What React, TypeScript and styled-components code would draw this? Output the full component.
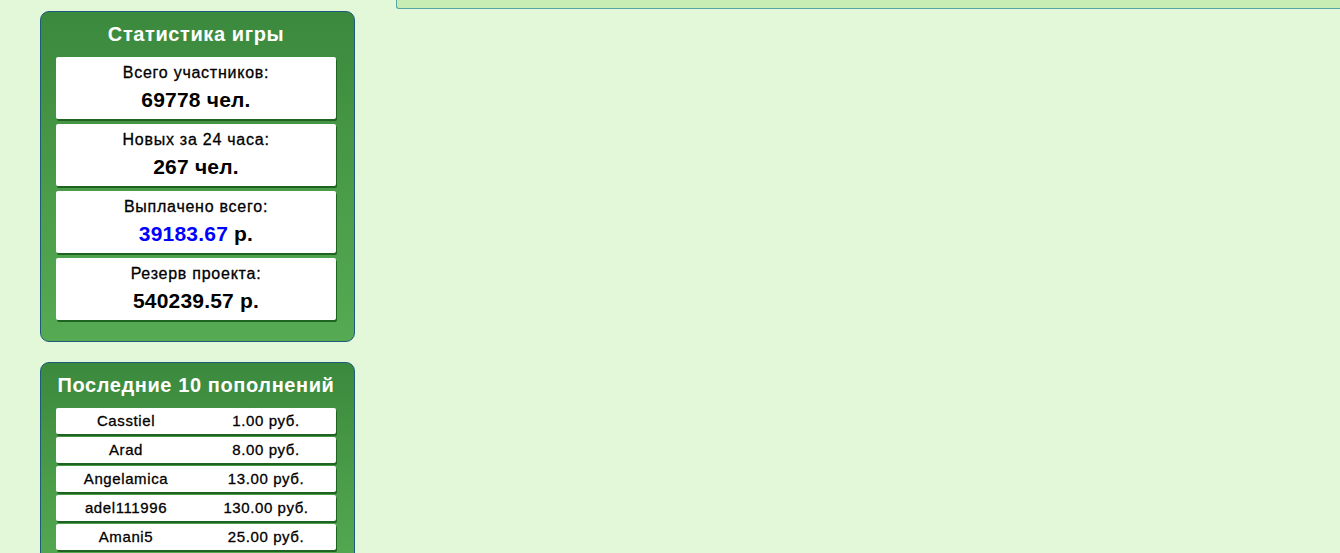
import React from "react";
import styled, { createGlobalStyle } from "styled-components";

const GlobalStyle = createGlobalStyle`
  html, body {
    margin: 0;
    padding: 0;
    background: #e3f8d8;
    font-family: "Liberation Sans", Arial, sans-serif;
    overflow: hidden;
  }
`;

const stats = [
  { label: "Всего участников:", value: "69778", unit: "чел." },
  { label: "Новых за 24 часа:", value: "267", unit: "чел." },
  { label: "Выплачено всего:", value: "39183.67", unit: "р.", blue: true },
  { label: "Резерв проекта:", value: "540239.57", unit: "р." },
];

const deposits = [
  { name: "Casstiel", sum: "1.00 руб." },
  { name: "Arad", sum: "8.00 руб." },
  { name: "Angelamica", sum: "13.00 руб." },
  { name: "adel111996", sum: "130.00 руб." },
  { name: "Amani5", sum: "25.00 руб." },
];

const App = () => {
  return (
    <>
      <GlobalStyle />
      <Page>
        <Sidebar>
          <Panel>
            <PanelTitle>Статистика игры</PanelTitle>
            {stats.map((s) => (
              <StatBox key={s.label}>
                <StatLabel>{s.label}</StatLabel>
                <StatValue>
                  <Num $blue={s.blue}>{s.value}</Num> {s.unit}
                </StatValue>
              </StatBox>
            ))}
          </Panel>
          <Panel>
            <PanelTitle>Последние 10 пополнений</PanelTitle>
            {deposits.map((d) => (
              <Row key={d.name}>
                <Cell>{d.name}</Cell>
                <Cell>{d.sum}</Cell>
              </Row>
            ))}
          </Panel>
        </Sidebar>
        <Content>
          <TopStrip />
        </Content>
      </Page>
    </>
  );
};

export default App;

const Page = styled.div`
  display: flex;
  gap: 41px;
  padding-left: 40px;
  height: 553px;
  overflow: hidden;
`;

const Sidebar = styled.div`
  width: 315px;
  flex-shrink: 0;
  padding-top: 11px;
  display: flex;
  flex-direction: column;
  gap: 20px;
`;

const Panel = styled.div`
  box-sizing: border-box;
  width: 315px;
  border: 1px solid #1d5a7c;
  border-radius: 9px;
  background: linear-gradient(180deg, #3b893d 0%, #4c9e4a 60%, #56aa53 100%);
  padding: 0 18px 21px 15px;
`;

const PanelTitle = styled.div`
  color: #ffffff;
  font-size: 20px;
  font-weight: bold;
  letter-spacing: 0.6px;
  text-align: center;
  white-space: nowrap;
  height: 45px;
  line-height: 45px;
`;

const StatBox = styled.div`
  background: #ffffff;
  height: 62px;
  margin-bottom: 5px;
  border-radius: 2px;
  box-shadow: 1px 2px 0 #1f6320;
  display: flex;
  flex-direction: column;
  align-items: center;
  padding-top: 7px;
  box-sizing: border-box;
  &:last-child {
    margin-bottom: 0;
  }
`;

const StatLabel = styled.div`
  font-size: 16px;
  letter-spacing: 0.75px;
  line-height: 18px;
  color: #000;
  -webkit-text-stroke: 0.3px #000;
`;

const StatValue = styled.div`
  font-size: 21px;
  font-weight: bold;
  letter-spacing: 0.2px;
  line-height: 36px;
  color: #000;
`;

const Num = styled.span<{ $blue?: boolean }>`
  color: ${(p) => (p.$blue ? "#0000ff" : "#000")};
`;

const Row = styled.div`
  display: grid;
  grid-template-columns: 1fr 1fr;
  background: #ffffff;
  height: 26px;
  margin-bottom: 3px;
  border-radius: 2px;
  box-shadow: 1px 2px 0 #1f6320;
`;

const Cell = styled.div`
  font-size: 15px;
  letter-spacing: 0.6px;
  line-height: 26px;
  text-align: center;
  color: #000;
  -webkit-text-stroke: 0.3px #000;
`;

const Content = styled.div`
  flex: 1;
  min-width: 0;
`;

const TopStrip = styled.div`
  height: 8px;
  background: #c8edb4;
  border-left: 1px solid #56a5a0;
  border-bottom: 1px solid #56a5a0;
  border-bottom-left-radius: 3px;
`;
